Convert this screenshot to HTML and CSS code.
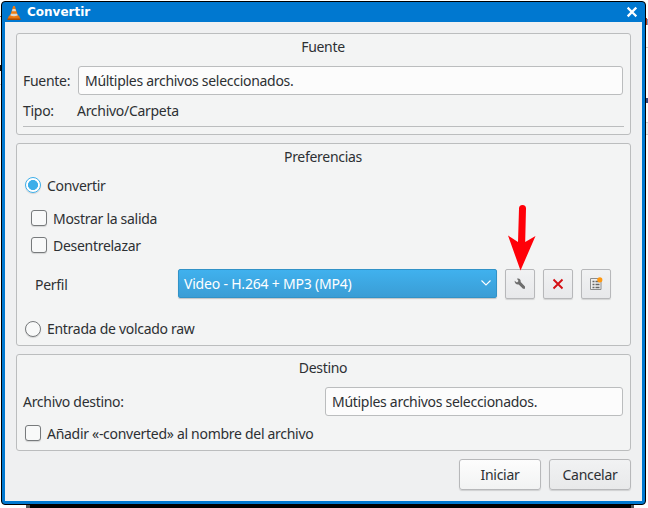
FILE: index.html
```html
<!DOCTYPE html>
<html lang="es">
<head>
<meta charset="utf-8">
<title>Convertir</title>
<link rel="stylesheet" href="styles.css">
</head>
<body>
<div class="desktop">
  <i class="bit left-rule"></i><i class="bit left-dark"></i><i class="bit left-line"></i>
  <i class="bit right-red"></i><i class="bit right-blue"></i><i class="bit right-rule"></i><i class="bit right-mark"></i><i class="bit right-band"></i>
  <i class="bit shade"></i>
  <main class="window">
    <header class="titlebar">
      <svg class="cone" viewBox="0 0 14 16" width="14" height="16">
        <path d="M2 10.5h10l1.500 4H.5z" fill="#e87511"/>
        <path d="M.5 13.500h13v1.500H.5z" fill="#a84a00"/>
        <path d="M6.200 1h1.600l3.300 10.400q-4 2.200-8.200 0z" fill="#f07c10"/>
        <path d="M5.600 4h2.800l.7 2.200H4.900zM3.900 8.800h6.300l.5 1.700q-3.700 1.400-7.400 0z" fill="#dcdad2"/>
      </svg>
      <h1>Convertir</h1>
      <svg class="close" viewBox="0 0 12 12" width="12" height="12"><path d="M2.500 2.500l7 7M9.500 2.500l-7 7" stroke="#fff" stroke-width="2.300" fill="none" stroke-linecap="square"/></svg>
    </header>
    <div class="content">
      <section class="group source">
        <h2>Fuente</h2>
        <div class="row source-row"><label>Fuente:</label><div class="field">Múltiples archivos seleccionados.</div></div>
        <div class="row type-row"><label>Tipo:</label><span>Archivo/Carpeta</span></div>
        <hr>
      </section>
      <section class="group prefs">
        <h2>Preferencias</h2>
        <div class="row option convert"><i class="radio on"></i><span>Convertir</span></div>
        <div class="row option sub"><i class="check"></i><span>Mostrar la salida</span></div>
        <div class="row option sub"><i class="check"></i><span>Desentrelazar</span></div>
        <div class="row profile">
          <label>Perfil</label>
          <div class="combo"><span>Video - H.264 + MP3 (MP4)</span>
            <svg viewBox="0 0 12 8" width="12" height="8"><path d="M1.500 1.500L6 6l4.500-4.500" fill="none" stroke="#fff" stroke-width="1.100"/></svg>
          </div>
          <div class="tool">
            <svg viewBox="0 0 16 16" width="16" height="16"><path d="M2.600 4.800L5 6.500 6.500 5 5 2.700C7.300 2 9 3.600 8.700 6L13 10.500V12.800H11L6.700 8.500C4.500 9 2.600 7.300 2.600 4.800z" fill="#6e6e6e"/></svg>
            <svg class="arrow" viewBox="0 0 30 68" width="30" height="68"><path d="M14 4.500Q14 1 17.500 1T21 4.500L20.200 38 30.500 32 15.500 66.500 3 31.500 13 38z" fill="#ff0008"/></svg>
          </div>
          <div class="tool"><svg viewBox="0 0 16 16" width="16" height="16"><path d="M3.500 3.500l9 9M12.500 3.500l-9 9" stroke="#d40f14" stroke-width="1.900"/></svg></div>
          <div class="tool"><svg viewBox="0 0 16 16" width="16" height="16"><path d="M2.500 2.500h10.500v11H2.500z" fill="#eee" stroke="#8c8c8c"/><path d="M4.500 5.500h2m1 0h4m-7 3h2m1 0h4m-7 3h2m1 0h4" stroke="#666" stroke-width="1.300"/><circle cx="11.800" cy="3.800" r="2.600" fill="#ff9810"/></svg></div>
        </div>
        <div class="row option raw"><i class="radio"></i><span>Entrada de volcado raw</span></div>
      </section>
      <section class="group target">
        <h2>Destino</h2>
        <div class="row target-row"><label>Archivo destino:</label><div class="field">Mútiples archivos seleccionados.</div></div>
        <div class="row option append"><i class="check"></i><span>Añadir «-converted» al nombre del archivo</span></div>
      </section>
      <footer><button class="primary">Iniciar</button><button>Cancelar</button></footer>
    </div>
  </main>
</div>
</body>
</html>
```
FILE: styles.css
```css
* { box-sizing: border-box; }
body { margin: 0; background: #fff; color: #2d3033; font: 14px/20px "Noto Sans", sans-serif; letter-spacing: -0.29px; overflow: hidden; white-space: nowrap; }
.desktop { position: relative; width: 648px; height: 508px; padding: 1px; overflow: hidden; }
.bit { position: absolute; }
.left-rule { left: 0; top: 16px; width: 2px; height: 1px; background: #777; }
.left-dark { left: 0; top: 65px; width: 2px; height: 6px; background: #111; }
.left-line { left: 0; top: 84px; width: 2px; height: 1px; background: #ccc; }
.right-red { left: 646px; top: 18px; width: 1px; height: 7px; background: #b53b19; }
.right-blue { left: 647px; top: 19px; width: 1px; height: 6px; background: #7799c4; }
.right-rule { left: 646px; top: 47px; width: 2px; height: 1px; background: #ccc; }
.right-mark { left: 646px; top: 98px; width: 2px; height: 5px; background: #354577; }
.right-band { left: 646px; top: 122px; width: 2px; height: 13px; background: #eee; border: solid #ccc; border-width: 1px 0; }
.shade { left: 26px; top: 504px; width: 608px; height: 4px; background: #000; border: solid #555; border-width: 0 3px 0 4px; }
.window { position: relative; width: 645px; height: 504px; border: 1px solid #000; border-radius: 4px; background: #0078d0; padding: 0 3px 3px; overflow: hidden; }
.titlebar { height: 20px; display: flex; align-items: center; padding: 0 4px 0 2px; color: #fff; }
.cone { flex: none; margin-top: 1px; }
.titlebar h1 { flex: 1; margin: -1px 0 0 6px; font: bold 12px/18px "DejaVu Sans", sans-serif; letter-spacing: 0; }
.content { height: 479px; padding: 11px; background: #eff0f1; display: flex; flex-direction: column; gap: 8px; }
.group { border: 1px solid #bbbdbe; border-radius: 3px; background: #f3f4f4; padding: 3px 7px 0 6px; }
.source { height: 102px; }
.prefs { height: 203px; }
.target { height: 97px; }
h2 { margin: 0; text-align: center; font: inherit; }
.row { display: flex; align-items: center; }
.field { height: 29px; padding: 0 6px; border: 1px solid #bbbdbe; border-radius: 3px; background: #fcfcfc; line-height: 27px; flex: 1; }
.source-row { margin-top: 9px; }
.source-row label { width: 55px; }
.type-row { margin-top: 6px; }
.type-row label { width: 54px; }
hr { margin: 5px -1px 0 0; border: 0; border-top: 1px solid #bbbdbe; }
.option { padding-left: 2px; gap: 6px; height: 20px; }
.option span { padding-top: 2px; }
.radio, .check { width: 16px; height: 16px; border: 1px solid #777a7c; border-radius: 3px; background: #f8f9f9; box-shadow: 0 1px 1px #0002; }
.radio { border-radius: 50%; }
.radio.on { border-color: #3daee9; background: radial-gradient(circle, #3daee9 4.7px, #fff 5.3px); }
.convert { margin-top: 8px; }
.sub { padding-left: 8px; margin-top: 13px; }
.sub + .sub { margin-top: 7px; }
.profile { margin: 14px 12px 0 12px; height: 30px; }
.profile label { width: 143px; padding-top: 1px; }
.combo { width: 319px; height: 29px; align-self: flex-start; display: flex; align-items: center; justify-content: space-between; padding: 0 4px 0 5px; border: 1px solid #3192c7; border-radius: 2px; background: linear-gradient(#40b1ee, #3a9dd5); color: #fff; letter-spacing: -0.2px; box-shadow: 0 1px 1px #0003; }
.combo svg { margin-top: -2px; }
.tool { position: relative; width: 30px; height: 30px; margin-left: 8px; display: flex; align-items: center; justify-content: center; border: 1px solid #b7b8ba; border-radius: 2px; background: linear-gradient(#f1f2f3, #e7e8ea); box-shadow: 0 1px 1px #0002; }
.arrow { position: absolute; left: -1px; top: -66px; overflow: visible; }
.raw { margin-top: 20px; }
.raw span { padding-top: 0; }
.raw .radio { margin-top: -1px; }
.target-row { margin-top: 9px; }
.target-row label { width: 302px; }
.append { margin-top: 7px; }
footer { display: flex; justify-content: flex-end; gap: 8px; }
button { width: 82px; height: 31px; padding: 0; border: 1px solid #b7b8ba; border-radius: 3px; background: linear-gradient(#f1f2f3, #e8e9ea); color: inherit; font: inherit; letter-spacing: inherit; box-shadow: 0 1px 1px #0002; }
.primary { background: linear-gradient(#fdfdfd, #f2f3f3); }
```
